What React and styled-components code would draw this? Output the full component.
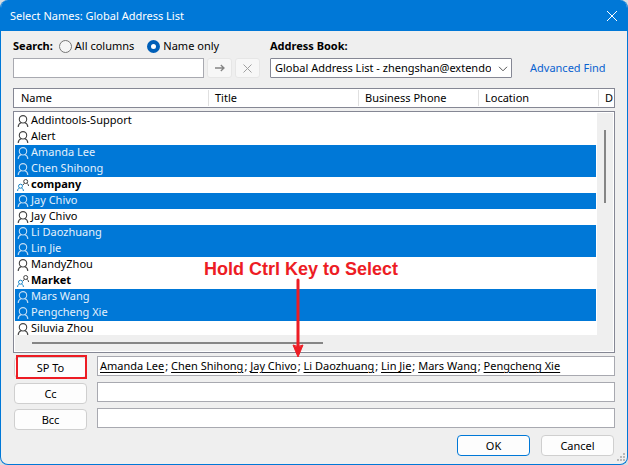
import { useState } from "react";
import styled, { createGlobalStyle } from "styled-components";

const contacts = [
  { id: 1, name: "Addintools-Support" },
  { id: 2, name: "Alert" },
  { id: 3, name: "Amanda Lee" },
  { id: 4, name: "Chen Shihong" },
  { id: 5, name: "company", group: true },
  { id: 6, name: "Jay Chivo" },
  { id: 7, name: "Jay Chivo" },
  { id: 8, name: "Li Daozhuang" },
  { id: 9, name: "Lin Jie" },
  { id: 10, name: "MandyZhou" },
  { id: 11, name: "Market", group: true },
  { id: 12, name: "Mars Wang" },
  { id: 13, name: "Pengcheng Xie" },
  { id: 14, name: "Siluvia Zhou" },
];

const columns = ["Name", "Title", "Business Phone", "Location", "D"];

const PersonIcon = () => (
  <svg width="12" height="12" viewBox="0 0 12 12" fill="none" stroke="currentColor" strokeWidth="1.1">
    <circle cx="6" cy="4.3" r="3.7" />
    <path d="M1.2 12C1.2 9.8 2.4 8.4 4.4 7.6M10.8 12C10.8 9.8 9.6 8.4 7.6 7.6" />
  </svg>
);

const GroupIcon = () => (
  <svg width="12" height="12" viewBox="0 0 12 12" fill="none">
    <g stroke="#444">
      <circle cx="8.7" cy="2.5" r="2" />
      <path d="M6.1 6C6.2 5.2 6.8 4.6 7.6 4.3M11.5 7C11.5 5.5 10.8 4.7 9.8 4.3" />
    </g>
    <g stroke="#1e87c8">
      <circle cx="3.5" cy="7.2" r="2" />
      <path d="M0.6 12C0.6 10.4 1.3 9.5 2.4 9M6.4 12C6.4 10.4 5.7 9.5 4.6 9" />
    </g>
  </svg>
);

const App = () => {
  const [selected, setSelected] = useState([3, 4, 6, 8, 9, 12, 13]);
  const [scope, setScope] = useState("name");

  //ctrl adds or removes a row, a plain click picks just that one
  const handleSelect = (e, id) => {
    if (!e.ctrlKey) {
      setSelected([id]);
    } else if (selected.includes(id)) {
      setSelected(selected.filter((item) => item !== id));
    } else {
      setSelected([...selected, id]);
    }
  };

  const recipients = contacts.filter((c) => selected.includes(c.id));

  return (
    <>
      <GlobalStyle />
      <Dialog>
        <TitleBar>
          <Title>Select Names: Global Address List</Title>
          <CloseButton aria-label="Close">
            <svg width="12" height="12" viewBox="0 0 12 12" stroke="currentColor">
              <path d="M1 1L11 11M11 1L1 11" />
            </svg>
          </CloseButton>
        </TitleBar>

        <Content>
          <SearchArea>
            <SearchGroup>
              <OptionRow>
                <Label htmlFor="search">Search:</Label>
                <RadioLabel>
                  <Radio
                    type="radio"
                    name="scope"
                    checked={scope === "all"}
                    onChange={() => setScope("all")}
                  />
                  All columns
                </RadioLabel>
                <RadioLabel>
                  <Radio
                    type="radio"
                    name="scope"
                    checked={scope === "name"}
                    onChange={() => setScope("name")}
                  />
                  Name only
                </RadioLabel>
              </OptionRow>
              <ControlRow>
                <TextInput id="search" />
                <IconButton disabled aria-label="Go">
                  <svg width="10" height="8" viewBox="0 0 10 8" fill="none" stroke="#858585" strokeWidth="1.3">
                    <path d="M0 4H9M5.8 1L9 4L5.8 7" />
                  </svg>
                </IconButton>
                <IconButton disabled aria-label="Clear">
                  <svg width="9" height="9" viewBox="0 0 9 9" stroke="#a0a0a0">
                    <path d="M0.5 0.5L8.5 8.5M8.5 0.5L0.5 8.5" />
                  </svg>
                </IconButton>
              </ControlRow>
            </SearchGroup>

            <BookGroup>
              <OptionRow>
                <Label htmlFor="book">Address Book:</Label>
              </OptionRow>
              <ControlRow>
                <SelectWrapper>
                  <Select id="book">
                    <option>Global Address List - zhengshan@extendo</option>
                  </Select>
                  <Chevron width="10" height="6" viewBox="0 0 10 6" fill="none" stroke="#555">
                    <path d="M1 0.8L5 4.8L9 0.8" />
                  </Chevron>
                </SelectWrapper>
                <FindLink href="#find">Advanced Find</FindLink>
              </ControlRow>
            </BookGroup>
          </SearchArea>

          <ListArea>
            <Table>
              <TableHead>
                <HeadRow>
                  {columns.map((column) => (
                    <HeadCell key={column}>{column}</HeadCell>
                  ))}
                </HeadRow>
              </TableHead>
              <TableBody>
                {contacts.map((contact) => (
                  <Row
                    key={contact.id}
                    $selected={selected.includes(contact.id)}
                    onClick={(e) => handleSelect(e, contact.id)}
                  >
                    <NameCell $bold={contact.group}>
                      {contact.group ? <GroupIcon /> : <PersonIcon />}
                      {contact.name}
                    </NameCell>
                  </Row>
                ))}
              </TableBody>
            </Table>
            <VerticalTrack>
              <VerticalThumb />
            </VerticalTrack>
            <HorizontalTrack>
              <HorizontalThumb />
            </HorizontalTrack>
            <Callout>
              Hold Ctrl Key to Select
              <svg width="14" height="80" viewBox="0 0 14 80">
                <path d="M7 2V69" stroke="#ed1c24" strokeWidth="3" strokeLinecap="round" />
                <path d="M2 67Q7 70 12 67L7 79Z" fill="#ed1c24" stroke="#ed1c24" />
              </svg>
            </Callout>
          </ListArea>

          <Fields>
            <FieldRow>
              <PushButton $marked id="to">SP To</PushButton>
              <Recipients role="textbox" tabIndex={0} aria-labelledby="to">
                {recipients.map((person, i) => (
                  <span key={person.id}>
                    {i > 0 && "; "}
                    <u>{person.name}</u>
                  </span>
                ))}
              </Recipients>
            </FieldRow>
            <FieldRow>
              <PushButton id="cc">Cc</PushButton>
              <TextInput aria-labelledby="cc" />
            </FieldRow>
            <FieldRow>
              <PushButton id="bcc">Bcc</PushButton>
              <TextInput aria-labelledby="bcc" />
            </FieldRow>
          </Fields>

          <Footer>
            <PushButton $primary>OK</PushButton>
            <PushButton>Cancel</PushButton>
          </Footer>
        </Content>

        <Grip width="9" height="9" viewBox="0 0 9 9" fill="#b8b8b8">
          <path d="M7 0h2v2h-2zM7 3h2v2h-2zM4 3h2v2h-2zM7 6h2v2h-2zM4 6h2v2h-2zM1 6h2v2h-2z" />
        </Grip>
      </Dialog>
    </>
  );
};

const GlobalStyle = createGlobalStyle`
  * {
    box-sizing: border-box;
  }

  body {
    margin: 0;
    background: #d9dde1;
  }

  body,
  button,
  input,
  select {
    font-family: "Noto Sans", "Open Sans", sans-serif;
    font-size: 11px;
    line-height: 16px;
    color: #000;
  }
`;

const Dialog = styled.div`
  position: relative;
  display: flex;
  flex-direction: column;
  min-height: 100vh;
  border: 1px solid #0078d7;
  border-top: none;
  border-radius: 8px;
  background: #efefef;
  overflow: hidden;
`;

const TitleBar = styled.header`
  display: flex;
  align-items: center;
  justify-content: space-between;
  height: 31px;
  padding: 0 8px 0 9px;
  background: #0078d7;
  color: #fff;
`;

const Title = styled.h1`
  margin: 0;
  font-size: 11px;
  font-weight: 400;
`;

const CloseButton = styled.button`
  display: flex;
  padding: 1px;
  border: none;
  background: none;
  color: #fff;
`;

const Content = styled.main`
  padding: 6px 12px 8px;
`;

const SearchArea = styled.div`
  display: flex;
  gap: 10px;
`;

const SearchGroup = styled.div`
  width: 247px;
`;

const BookGroup = styled.div`
  flex: 1;
`;

const OptionRow = styled.div`
  display: flex;
  align-items: center;
  height: 18px;
`;

const ControlRow = styled.div`
  display: flex;
  align-items: center;
  gap: 3px;
  margin-top: 3px;
`;

const Label = styled.label`
  font-weight: 700;
`;

const RadioLabel = styled.label`
  display: flex;
  align-items: center;
  gap: 3px;
  margin-left: 6px;

  & + & {
    margin-left: 13px;
  }
`;

const Radio = styled.input`
  appearance: none;
  width: 13px;
  height: 13px;
  margin: 0;
  border: 1px solid #767676;
  border-radius: 50%;
  background: #f6f6f6;

  &:checked {
    border: 4px solid #005fb8;
    background: #fff;
  }
`;

const TextInput = styled.input`
  flex: 1;
  min-width: 0;
  height: 20px;
  padding: 0 3px;
  border: 1px solid #a8a9b0;
  border-radius: 0;
  background: #fff;
`;

const IconButton = styled.button`
  display: flex;
  align-items: center;
  justify-content: center;
  width: 25px;
  height: 20px;
  padding: 0;
  border: 1px solid #e6e6e6;
  border-radius: 3px;
  background: #f7f7f7;
`;

const SelectWrapper = styled.div`
  position: relative;
  width: 242px;
`;

const Select = styled.select`
  appearance: none;
  display: block;
  width: 100%;
  height: 20px;
  padding: 0 20px 0 4px;
  border: 1px solid #858794;
  border-radius: 1px;
  background: #fff;
`;

const Chevron = styled.svg`
  position: absolute;
  top: 8px;
  right: 4px;
  pointer-events: none;
`;

const FindLink = styled.a`
  margin-left: 15px;
  color: #0a62d0;
  text-decoration: none;
`;

const ListArea = styled.div`
  position: relative;
  margin-top: 10px;
`;

const Table = styled.table`
  display: block;
`;

const TableHead = styled.thead`
  display: block;
  height: 20px;
  border: 1px solid #858794;
  background: #fff;
  overflow: hidden;
`;

const HeadRow = styled.tr`
  display: grid;
  grid-template-columns: 194px 150px 120px 120px 1fr;
  padding: 1px 0 1px 1px;
`;

const HeadCell = styled.th`
  padding: 0 0 0 6px;
  border-right: 1px solid #e0e0e0;
  font-weight: 400;
  text-align: left;
  white-space: nowrap;

  &:last-child {
    border-right: none;
  }
`;

const TableBody = styled.tbody`
  display: block;
  height: 242px;
  margin-top: 3px;
  padding: 1px 18px 0 1px;
  border: 1px solid #858794;
  background: #fff;
  overflow: hidden;
`;

const Row = styled.tr`
  display: block;
  background: ${({ $selected }) => ($selected ? "#0078d7" : "#fff")};
  color: ${({ $selected }) => ($selected ? "#e4f1fc" : "#000")};

  svg {
    color: ${({ $selected }) => ($selected ? "#c3ddf4" : "#444")};
  }
`;

const NameCell = styled.td`
  display: flex;
  align-items: flex-start;
  gap: 2px;
  height: 16px;
  padding: 0 2px;
  font-weight: ${({ $bold }) => ($bold ? 700 : 400)};
  line-height: 14px;

  svg {
    margin-top: 2px;
  }
`;

//scrollbars lie over the right and bottom edges of the list
const VerticalTrack = styled.div`
  position: absolute;
  top: 25px;
  right: 2px;
  bottom: 2px;
  display: flex;
  justify-content: center;
  width: 16px;
  padding-top: 17px;
  background: #efefef;
`;

const VerticalThumb = styled.div`
  width: 2px;
  height: 73px;
  background: #858585;
`;

const HorizontalTrack = styled.div`
  position: absolute;
  left: 2px;
  right: 2px;
  bottom: 2px;
  display: flex;
  align-items: center;
  height: 16px;
  padding: 0 17px;
  background: #efefef;
`;

const HorizontalThumb = styled.div`
  width: 291px;
  height: 2px;
  background: #858585;
`;

const Callout = styled.div`
  position: absolute;
  top: 172px;
  left: 191px;
  display: flex;
  flex-direction: column;
  align-items: center;
  font-family: "Liberation Sans", Arial, sans-serif;
  font-size: 18px;
  font-weight: 700;
  line-height: 18px;
  color: #ed1c24;
  white-space: nowrap;
  pointer-events: none;

  svg {
    margin-right: 6px;
  }
`;

const Fields = styled.div`
  display: flex;
  flex-direction: column;
  gap: 4px;
  margin-top: 3px;
`;

const FieldRow = styled.div`
  display: flex;
  align-items: flex-start;
  gap: 10px;
  height: 22px;
  padding-left: 1px;

  button {
    align-self: flex-end;
  }
`;

const PushButton = styled.button`
  position: relative;
  width: 73px;
  height: 21px;
  padding: 0;
  border: 1px solid ${({ $primary }) => ($primary ? "#0078d7" : "#cfcfcf")};
  border-radius: 4px;
  background: #fdfdfd;

  /* red frame drawn over the button */
  &::after {
    content: "";
    display: ${({ $marked }) => ($marked ? "block" : "none")};
    position: absolute;
    inset: -3px -1px -2px 1px;
    border: 2px solid #ed1c24;
  }
`;

const Recipients = styled.div`
  flex: 1;
  height: 20px;
  padding: 1px 2px;
  border: 1px solid #a8a9b0;
  background: #fff;
  overflow: hidden;
  white-space: nowrap;

  u {
    text-underline-offset: 2px;
  }

  span + span {
    margin-left: 1px;
  }
`;

const Footer = styled.footer`
  display: flex;
  justify-content: flex-end;
  gap: 11px;
  margin-top: 5px;
  padding-right: 1px;
`;

const Grip = styled.svg`
  position: absolute;
  right: 2px;
  bottom: 2px;
`;

export default App;
